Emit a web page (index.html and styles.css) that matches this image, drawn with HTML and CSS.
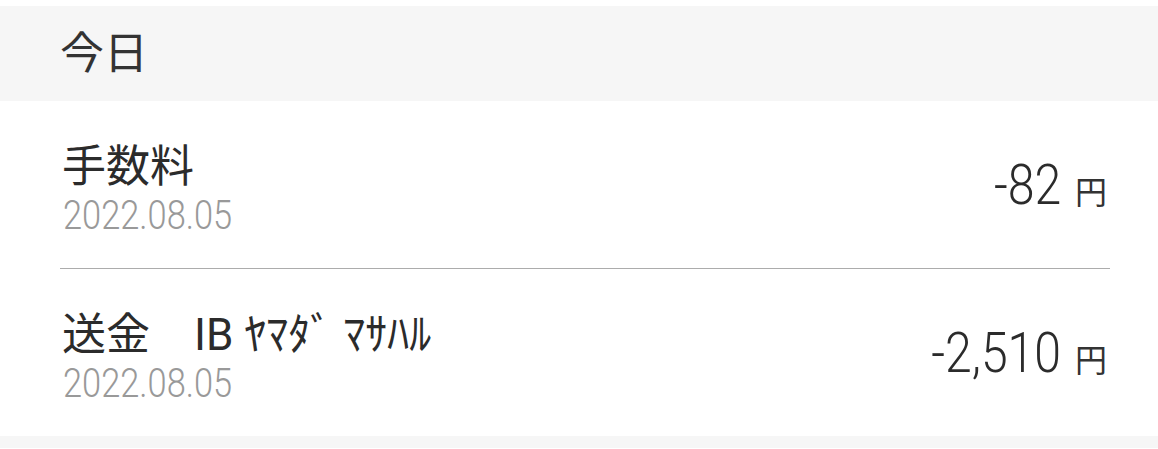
FILE: index.html
```html
<!DOCTYPE html>
<html lang="ja">
<head>
<meta charset="utf-8">
<title>取引履歴</title>
<link rel="stylesheet" href="styles.css">
</head>
<body>
<div class="page">
  <div class="day-head">今日</div>
  <ul class="tx-list">
    <li class="tx">
      <div class="tx-main">
        <div class="tx-title">手数料</div>
        <div class="tx-date"><span class="squeeze">2022.08.05</span></div>
      </div>
      <div class="tx-amount"><span class="num">-82</span><span class="yen">円</span></div>
    </li>
    <li class="tx">
      <div class="tx-main">
        <div class="tx-title">送金　IB ﾔﾏﾀﾞ ﾏｻﾊﾙ</div>
        <div class="tx-date"><span class="squeeze">2022.08.05</span></div>
      </div>
      <div class="tx-amount"><span class="num">-2,510</span><span class="yen">円</span></div>
    </li>
  </ul>
  <div class="day-foot"></div>
</div>
</body>
</html>
```
FILE: styles.css
```css
html, body, ul, li {
    margin: 0;
    padding: 0;
}

body {
    background: #fff;
    font-family: Roboto, "Noto Sans CJK JP", sans-serif;
    color: #2b2b2b;
    width: 1158px;
    height: 449px;
    overflow: hidden;
}

.page {
    padding-top: 6px;
}

.day-head {
    background: #f6f6f6;
    height: 95px;
    line-height: 97px;
    padding-left: 60px;
    font-size: 44px;
    color: #333;
}

.tx-list {
    list-style: none;
    margin: 0 48px 0 60px;
}

.tx {
    display: flex;
    align-items: center;
    justify-content: space-between;
    height: 168px;
    box-sizing: border-box;
    border-bottom: 1px solid #acacac;
}

.tx:last-child {
    border-bottom: none;
    height: 167px;
}

.tx-main {
    padding-top: 8px;
}

.tx-title {
    font-size: 44px;
    line-height: 54px;
    padding-left: 2px;
    white-space: nowrap;
}

.tx-date {
    font-size: 40px;
    font-weight: 300;
    line-height: 44px;
    color: #999;
    padding-left: 3px;
}

.squeeze {
    display: inline-block;
    transform: scaleX(0.86);
    transform-origin: left center;
}

.tx-amount {
    display: flex;
    align-items: baseline;
    padding-right: 3px;
}

.num {
    display: inline-block;
    font-size: 56px;
    font-weight: 300;
    transform: scaleX(0.86);
    transform-origin: right center;
}

.yen {
    font-size: 32px;
    margin-left: 14px;
    color: #333;
}

.day-foot {
    background: #f6f6f6;
    height: 12px;
}
```
